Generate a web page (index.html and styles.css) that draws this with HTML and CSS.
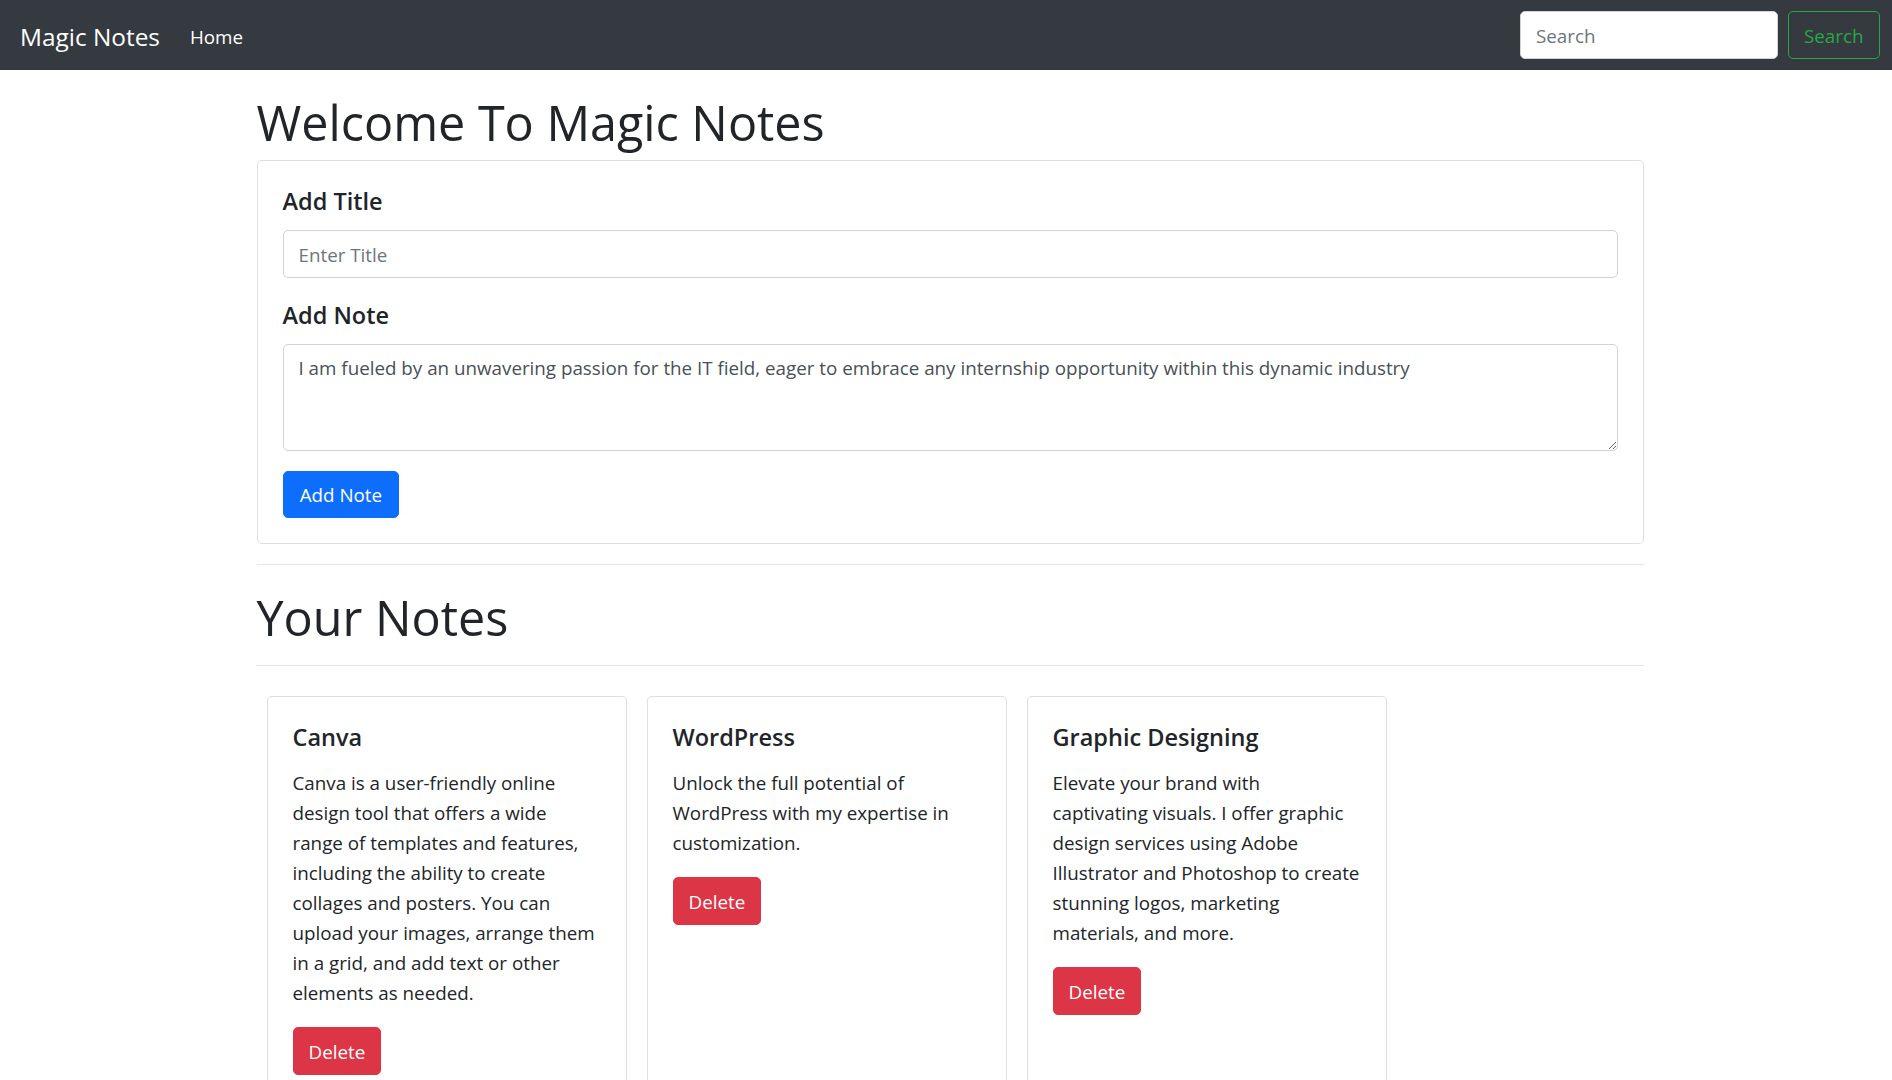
FILE: index.html
```html
<!DOCTYPE html>
<html lang="en">
<head>
<meta charset="utf-8">
<title>Magic Notes</title>
<link rel="stylesheet" href="styles.css">
</head>
<body>
<nav class="navbar">
  <a class="brand" href="#">Magic Notes</a>
  <ul class="nav">
    <li><a class="nav-link" href="#">Home</a></li>
  </ul>
  <form class="search-form">
    <input class="search-input" type="search" placeholder="Search">
    <button class="btn btn-outline-success" type="button">Search</button>
  </form>
</nav>

<main class="container">
  <h1 class="page-title">Welcome To Magic Notes</h1>
  <div class="card form-card">
    <div class="card-body">
      <div class="form-group group-title">
        <label class="form-label" for="addTitle">Add Title</label>
        <input class="form-control" id="addTitle" type="text" placeholder="Enter Title">
      </div>
      <div class="form-group">
        <label class="form-label" for="addTxt">Add Note</label>
        <textarea class="form-control note-area" id="addTxt" rows="3">I am fueled by an unwavering passion for the IT field, eager to embrace any internship opportunity within this dynamic industry</textarea>
      </div>
      <button class="btn btn-primary" type="button">Add Note</button>
    </div>
  </div>
  <hr class="divider">
  <h1 class="page-title">Your Notes</h1>
  <hr class="divider">
  <div class="notes">
    <div class="card note-card">
      <div class="card-body">
        <h5 class="card-title">Canva</h5>
        <p class="card-text">Canva is a user-friendly online design tool that offers a wide range of templates and features, including the ability to create collages and posters. You can upload your images, arrange them in a grid, and add text or other elements as needed.</p>
        <button class="btn btn-danger" type="button">Delete</button>
      </div>
    </div>
    <div class="card note-card">
      <div class="card-body">
        <h5 class="card-title">WordPress</h5>
        <p class="card-text">Unlock the full potential of WordPress with my expertise in customization.</p>
        <button class="btn btn-danger" type="button">Delete</button>
      </div>
    </div>
    <div class="card note-card">
      <div class="card-body">
        <h5 class="card-title">Graphic Designing</h5>
        <p class="card-text">Elevate your brand with captivating visuals. I offer graphic design services using Adobe Illustrator and Photoshop to create stunning logos, marketing materials, and more.</p>
        <button class="btn btn-danger" type="button">Delete</button>
      </div>
    </div>
  </div>
</main>
</body>
</html>
```

FILE: styles.css
```css
* { box-sizing: border-box; }

html, body { margin: 0; padding: 0; }

body {
  font-family: "Open Sans", "Noto Sans", sans-serif;
  font-size: 18.8px;
  line-height: 30px;
  color: #212529;
  background: #fff;
}

/* ---------- navbar ---------- */
.navbar {
  display: flex;
  align-items: center;
  height: 70px;
  padding: 10px 12.5px 10px 20px;
  background: #343a40;
}

.brand {
  display: inline-block;
  padding: 8.25px 0 4.25px;
  margin-right: 20px;
  font-size: 24.4px;
  line-height: 37.5px;
  color: #fff;
  text-decoration: none;
  white-space: nowrap;
}

.nav {
  display: flex;
  list-style: none;
  margin: 0;
  padding: 0;
}

.nav-link {
  display: block;
  padding: 11.5px 10px 8.5px;
  color: #fff;
  text-decoration: none;
  line-height: 30px;
}

.search-form {
  display: flex;
  align-items: center;
  margin-left: auto;
}

.search-input {
  width: 258px;
  height: 47.5px;
  padding: 8.5px 15px 6.5px;
  margin-right: 10px;
  font-family: inherit;
  font-size: 18.8px;
  line-height: 30px;
  color: #495057;
  background: #fff;
  border: 1px solid #ced4da;
  border-radius: 5px;
}

.search-input::placeholder,
.form-control::placeholder { color: #6c757d; opacity: 1; }

/* ---------- buttons ---------- */
.btn {
  display: inline-block;
  height: 47.5px;
  padding: 8.5px 15px 6.5px;
  font-family: inherit;
  font-size: 18.8px;
  line-height: 30px;
  font-weight: 400;
  border: 1px solid transparent;
  border-radius: 5px;
  cursor: pointer;
  white-space: nowrap;
}

.btn-outline-success {
  color: #28a745;
  background: transparent;
  border-color: #28a745;
}

.btn-primary {
  padding-left: 16.2px;
  padding-right: 16.2px;
  color: #fff;
  background: #0d6efd;
  border-color: #0d6efd;
}

.btn-danger {
  color: #fff;
  background: #dc3545;
  border-color: #dc3545;
}

/* ---------- main ---------- */
.container {
  width: 1387.5px;
  margin: 20px 0 0 calc(50% - 689.5px);
}

.page-title {
  margin: 0 0 10px;
  padding-top: 5px;
  font-size: 48.5px;
  line-height: 55px;
  font-weight: 500;
  color: #212529;
}

.card {
  background: #fff;
  border: 1px solid rgba(0, 0, 0, .125);
  border-radius: 5px;
}

.card-body { padding: 25px; }

.form-group { margin-bottom: 20px; }
.group-title { margin-bottom: 22px; }

.form-label {
  display: block;
  margin-bottom: 14px;
  padding-top: 1px;
  font-size: 23.5px;
  line-height: 29px;
  font-weight: 600;
  color: #212529;
}

.form-control {
  display: block;
  width: 100%;
  height: 47.5px;
  padding: 8.5px 15px 6.5px;
  font-family: inherit;
  font-size: 18.8px;
  line-height: 30px;
  color: #495057;
  background: #fff;
  border: 1px solid #ced4da;
  border-radius: 5px;
  margin: 0;
}

.note-area {
  height: 107px;
  resize: vertical;
  overflow: auto;
}

.divider {
  margin: 20px 0;
  border: 0;
  border-top: 1px solid rgba(0, 0, 0, .1);
  height: 0;
}

.notes {
  display: flex;
  flex-wrap: wrap;
}

.note-card {
  width: 360px;
  margin: 10px;
}

.note-card .card-body {
  padding-right: 25.7px;
}

.card-title {
  margin: 0 0 15px;
  padding-top: 1px;
  font-size: 23.5px;
  line-height: 29px;
  font-weight: 600;
}

.card-text {
  margin: 0 0 20px;
  padding-top: 1px;
  line-height: 30px;
}

.card-text + .btn { margin-top: -1px; }
```
